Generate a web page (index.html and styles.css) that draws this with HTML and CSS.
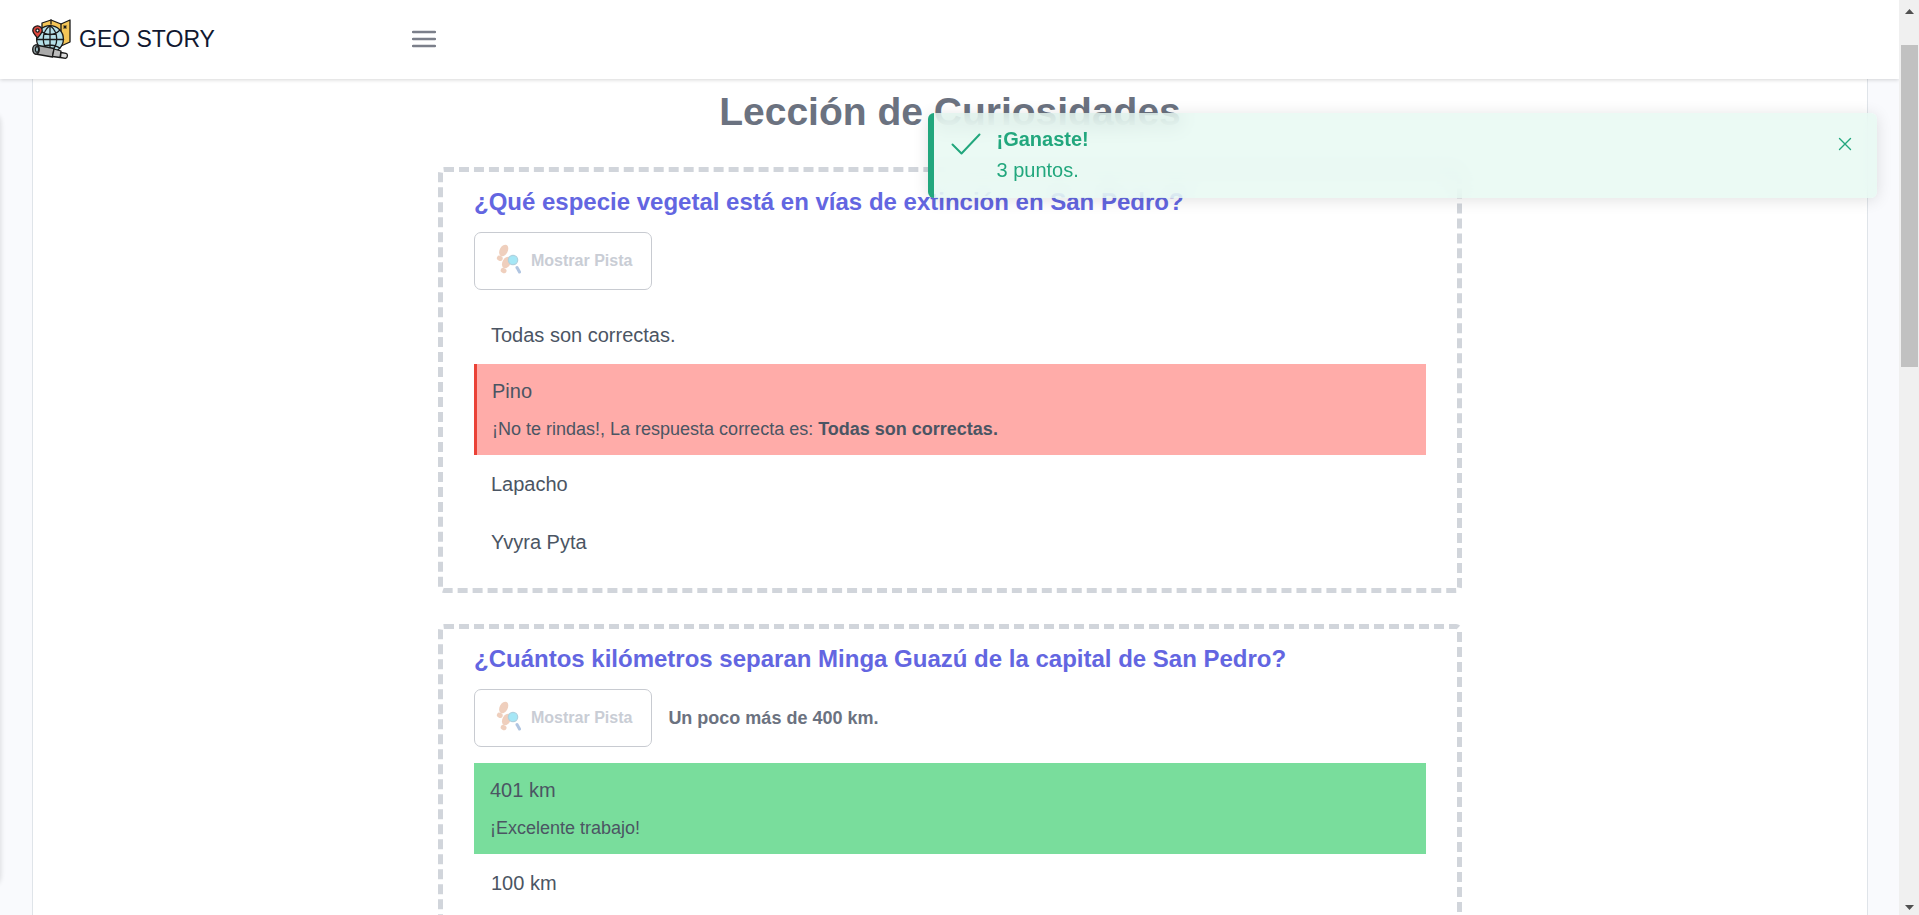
FILE: index.html
```html
<!DOCTYPE html>
<html lang="es">
<head>
<meta charset="utf-8">
<title>Geo Story</title>
<link rel="stylesheet" href="styles.css">
</head>
<body>
<svg class="defs" aria-hidden="true">
  <symbol id="clue" viewBox="0 0 28 34">
    <g fill="#d98a5b">
      <ellipse cx="8.700" cy="6.500" rx="4" ry="6.200" transform="rotate(28 8.700 6.500)"/>
      <ellipse cx="4.800" cy="14.300" rx="3" ry="2.500" transform="rotate(28 4.800 14.300)"/>
      <ellipse cx="11.500" cy="18.500" rx="4" ry="6.200" transform="rotate(28 11.500 18.500)"/>
      <ellipse cx="8.600" cy="26.600" rx="3" ry="2.500" transform="rotate(28 8.600 26.600)"/>
    </g>
    <path d="M22 23.500l2.500 4.500" stroke="#3b6fb5" stroke-width="3" stroke-linecap="round"/>
    <circle cx="18" cy="16" r="4.700" fill="#fff"/>
    <circle cx="18" cy="16" r="4.700" fill="#20c4ea" stroke="#3a8fb0" stroke-width="1.200"/>
  </symbol>
</svg>
<div class="app">
  <div class="page">
    <header class="topbar">
      <a class="brand" href="#">
        <svg class="logo" viewBox="0 0 40 40" aria-hidden="true">
          <g stroke="#1a1a1a" stroke-width="1.3" stroke-linejoin="round" stroke-linecap="round">
            <path d="M10 4l9-3 10 4 9-4v22l-9 4-19-6z" fill="#f4c557"/>
            <path d="M29 5v18M19 1v4M32 7l2 2M34 7l-2 2" fill="none"/>
            <circle cx="18" cy="20" r="13.4" fill="#b5dfe7"/>
            <path d="M18 6.600v27M4.600 20.500h27M8 11c6 6 14 6 20 0M18 6.600c-9 7-9 20 0 27M18 6.600c9 7 9 20 0 27M8 29c6-4 14-4 20 0" fill="none"/>
            <path d="M5.500 19C2 15 .8 13.500.8 11.500a4.700 4.700 0 0 1 9.400 0c0 2-1.200 3.500-4.700 7.500z" fill="#e0483e"/>
            <circle cx="5.500" cy="11.500" r="1.600" fill="#fff"/>
            <path d="M4 26l18 3.500-1.500 8.500-17-3z" fill="#aaa"/>
            <path d="M22 30l7 2-1 6.500-7.500-1z" fill="#bbb"/>
            <path d="M29 33.500l5 .8c2 .5 2 4.500-.5 5l-5-.8z" fill="#ddd"/>
            <ellipse cx="4" cy="30.500" rx="3.300" ry="4.700" fill="#8d9a9c"/>
            <ellipse cx="5" cy="30.500" rx="1.500" ry="2.800" fill="#b5dfe7"/>
          </g>
        </svg>
        <span>GEO STORY</span>
      </a>
      <button class="menu" type="button" aria-label="Menú">
        <svg viewBox="0 0 24 18" aria-hidden="true"><path d="M1 2h22M1 9h22M1 16h22"/></svg>
      </button>
    </header>

    <aside class="drawer" aria-hidden="true"></aside>

    <main class="lesson">
      <h1>Lección de Curiosidades</h1>

      <section class="question">
        <h2>¿Qué especie vegetal está en vías de extinción en San Pedro?</h2>
        <div class="hint">
          <button class="hint-button" type="button" disabled><svg aria-hidden="true"><use href="#clue"/></svg>Mostrar Pista</button>
        </div>
        <ul class="options">
          <li>Todas son correctas.</li>
          <li class="wrong">Pino<p>¡No te rindas!, La respuesta correcta es: <strong>Todas son correctas.</strong></p></li>
          <li>Lapacho</li>
          <li>Yvyra Pyta</li>
        </ul>
      </section>

      <section class="question">
        <h2>¿Cuántos kilómetros separan Minga Guazú de la capital de San Pedro?</h2>
        <div class="hint">
          <button class="hint-button" type="button" disabled><svg aria-hidden="true"><use href="#clue"/></svg>Mostrar Pista</button>
          <strong>Un poco más de 400 km.</strong>
        </div>
        <ul class="options">
          <li class="right">401 km<p>¡Excelente trabajo!</p></li>
          <li>100 km</li>
          <li></li>
        </ul>
      </section>
    </main>

    <div class="toast" role="alert">
      <svg class="toast-check" viewBox="0 0 30 22" aria-hidden="true"><path d="M1.500 11.500l9 9L28.500 1.500"/></svg>
      <div class="toast-text">
        <strong>¡Ganaste!</strong>
        <span>3 puntos.</span>
      </div>
      <button class="toast-close" type="button" aria-label="Cerrar">
        <svg viewBox="0 0 12 12" aria-hidden="true"><path d="M.5.5l11 11M11.500.5l-11 11"/></svg>
      </button>
    </div>
  </div>

  <div class="scrollbar" aria-hidden="true">
    <svg viewBox="0 0 9 5"><path d="M0 5L4.500 0 9 5z"/></svg>
    <div class="track"><div class="thumb"></div></div>
    <svg viewBox="0 0 9 5"><path d="M0 0l4.500 5L9 0z"/></svg>
  </div>
</div>
</body>
</html>
```

FILE: styles.css
```css
* { box-sizing: border-box; }

body {
  margin: 0;
  font-family: "Liberation Sans", Arial, sans-serif;
  font-size: 20px;
  line-height: 28px;
  color: #4b5563;
}

h1, h2, p, ul { margin: 0; padding: 0; }
button { font: inherit; color: inherit; background: none; border: 0; padding: 0; }
.defs { position: absolute; width: 0; height: 0; }

.app {
  display: grid;
  grid-template-columns: 1fr 20px;
  height: 100vh;
  overflow: hidden;
}

.page {
  position: relative;
  display: flex;
  flex-direction: column;
  overflow: hidden;
  background: #f9fafd;
}

.topbar {
  position: relative;
  z-index: 1;
  flex: none;
  display: flex;
  align-items: center;
  height: 79px;
  padding: 0 32px 1px;
  background: #fff;
  box-shadow: 0 1px 4px rgba(0, 0, 0, .16);
}

.brand {
  display: flex;
  align-items: center;
  gap: 7px;
  width: 380px;
  color: #111830;
  font-size: 23px;
  text-decoration: none;
}
.logo { width: 40px; height: 40px; }

.menu { display: flex; }
.menu svg { width: 24px; height: 18px; }
.menu path { fill: none; stroke: #7b7f8a; stroke-width: 2.4; stroke-linecap: round; }

.drawer {
  position: absolute;
  top: 112px;
  bottom: 28px;
  left: -300px;
  width: 300px;
  border-radius: 12px;
  background: #fff;
  box-shadow: 0 0 5px 1px rgba(0, 0, 0, .12);
}

.lesson {
  flex: 1;
  min-height: 0;
  margin: 0 31px 0 32px;
  padding: 9px 32px;
  display: flex;
  flex-direction: column;
  align-items: center;
  background: #fff;
  border: solid #dfe4e9;
  border-width: 0 1px;
}
h1 {
  margin-bottom: 31px;
  font-size: 39px;
  line-height: 48px;
  color: #6b7280;
}

.question {
  flex: none;
  width: 100%;
  max-width: 1024px;
  margin-bottom: 31px;
  padding: 16px 31px 17px;
  border: 5px dashed #d1d5db;
  border-radius: 6px;
}
h2 {
  margin-bottom: 16px;
  font-size: 24px;
  line-height: 28px;
  color: #6366e1;
}

.hint {
  display: flex;
  align-items: center;
  gap: 16px;
  margin-bottom: 16px;
  font-size: 18px;
  color: #6b7280;
}
.hint-button {
  display: flex;
  align-items: center;
  gap: 8px;
  height: 58px;
  padding: 0 19px 0 20px;
  border: 1px solid #c8cbd1;
  border-radius: 7px;
  font-size: 16px;
  font-weight: bold;
  color: #c9cdd5;
}
.hint-button svg { width: 28px; height: 34px; opacity: .4; }

.options { list-style: none; }
.options li { min-height: 58px; padding: 15px 17px; }
.options p { margin-top: 10px; font-size: 18px; }
.options .wrong {
  padding: 13px 15px 12px;
  background: #ffaca9;
  border-left: 3px solid #ea4237;
}
.options .right { padding: 13px 16px 12px; background: #79dd9c; }

.toast {
  position: absolute;
  z-index: 2;
  top: 113px;
  right: 22px;
  width: 50%;
  min-height: 85px;
  padding: 12px 26px 10px 17px;
  display: flex;
  align-items: flex-start;
  border-left: 6px solid #22a77d;
  border-radius: 6px;
  background: rgba(228, 248, 240, .75);
  backdrop-filter: blur(10px);
  box-shadow: 0 2px 16px rgba(0, 0, 0, .12);
  color: #22a77d;
}
.toast path { fill: none; stroke: currentColor; stroke-linecap: round; stroke-linejoin: round; }
.toast-check { width: 30px; height: 22px; margin: 8px 16px 0 0; stroke-width: 2; }
.toast-text { flex: 1; display: flex; flex-direction: column; gap: 3px; }
.toast-close { display: flex; margin-top: 13px; }
.toast-close svg { width: 12px; height: 12px; overflow: visible; stroke-width: 1.4; }

.scrollbar {
  display: flex;
  flex-direction: column;
  align-items: center;
  padding: 9px 1px 5px 2px;
  background: #f0f0f0;
}
.scrollbar svg { width: 9px; height: 5px; fill: #505050; }
.track { flex: 1; width: 100%; padding-top: 31px; }
.thumb { height: 37.4%; background: #c1c1c1; }
```
